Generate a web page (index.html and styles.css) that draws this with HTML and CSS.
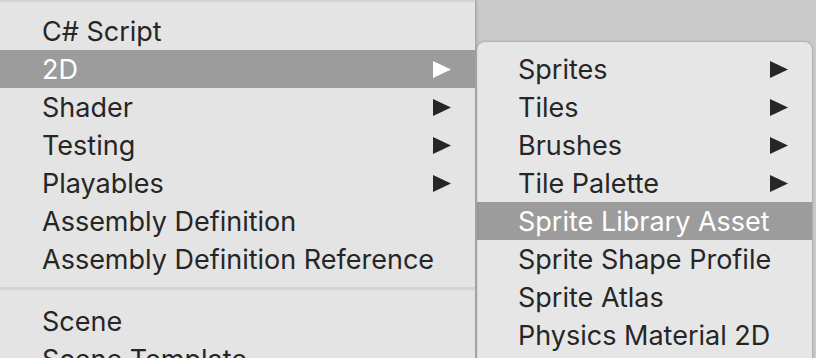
FILE: index.html
```html
<!DOCTYPE html>
<html>
	<head lang="en">
		<meta charset="UTF-8">
		<title>Create menu</title>
		<link rel="stylesheet" href="styles.css">
	</head>
	<body>
		<div class="desk">
			<div class="menu main">
				<div class="item">C# Script</div>
				<div class="item on">2D<svg class="arrow" viewBox="0 0 18 17"><polygon points="0,0 18,8.5 0,17"/></svg></div>
				<div class="item">Shader<svg class="arrow" viewBox="0 0 18 17"><polygon points="0,0 18,8.5 0,17"/></svg></div>
				<div class="item">Testing<svg class="arrow" viewBox="0 0 18 17"><polygon points="0,0 18,8.5 0,17"/></svg></div>
				<div class="item">Playables<svg class="arrow" viewBox="0 0 18 17"><polygon points="0,0 18,8.5 0,17"/></svg></div>
				<div class="item">Assembly Definition</div>
				<div class="item">Assembly Definition Reference</div>
				<div class="sep"></div>
				<div class="item">Scene</div>
				<div class="item">Scene Template</div>
			</div>
			<div class="menu sub">
				<div class="item">Sprites<svg class="arrow" viewBox="0 0 18 17"><polygon points="0,0 18,8.5 0,17"/></svg></div>
				<div class="item">Tiles<svg class="arrow" viewBox="0 0 18 17"><polygon points="0,0 18,8.5 0,17"/></svg></div>
				<div class="item">Brushes<svg class="arrow" viewBox="0 0 18 17"><polygon points="0,0 18,8.5 0,17"/></svg></div>
				<div class="item">Tile Palette<svg class="arrow" viewBox="0 0 18 17"><polygon points="0,0 18,8.5 0,17"/></svg></div>
				<div class="item on">Sprite Library Asset</div>
				<div class="item">Sprite Shape Profile</div>
				<div class="item">Sprite Atlas</div>
				<div class="item">Physics Material 2D</div>
			</div>
		</div>
	</body>
</html>
```
FILE: styles.css
```css
* {
	margin: 0;
	padding: 0;
	box-sizing: border-box;
}

body {
	background: #c9c9c9;
	font-family: "Inter", "Liberation Sans", sans-serif;
	font-size: 27px;
	color: #262626;
	overflow: hidden;
}

.desk {
	display: flex;
	align-items: flex-start;
	height: 358px;
}

.menu {
	flex: none;
}

.main {
	width: 475px;
	height: 400px;
	background: #e4e4e4;
	border-top: 2px solid #d4d4d4;
	padding-top: 10px;
	box-shadow: 1px 0 3px rgba(0, 0, 0, 0.25);
	position: relative;
	z-index: 1;
}

.sub {
	width: 335px;
	height: 340px;
	margin-left: 2px;
	margin-top: 42px;
	padding-top: 8px;
	background: #e6e6e6;
	border-radius: 8px 8px 0 0;
	box-shadow: 0 0 3px rgba(0, 0, 0, 0.3);
}

.item {
	display: flex;
	align-items: center;
	justify-content: space-between;
	height: 38px;
	padding-left: 42px;
	padding-right: 24px;
	white-space: nowrap;
}

.sub .item {
	padding-left: 41px;
	padding-right: 24px;
}

.item.on {
	background: #9c9c9c;
	color: #fff;
}

.arrow {
	width: 18px;
	height: 17px;
	fill: #262626;
}

.on .arrow {
	fill: #fff;
}

.sep {
	height: 3px;
	margin: 9px 0 12px;
	background: #d4d4d4;
}
```
